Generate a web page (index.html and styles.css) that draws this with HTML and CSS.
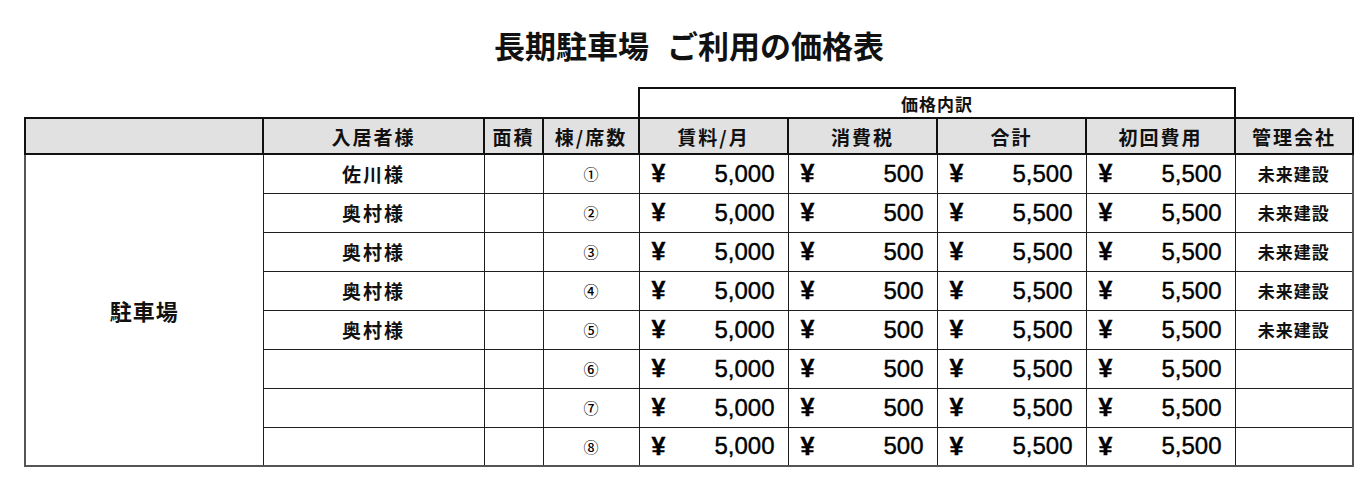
FILE: index.html
```html
<!DOCTYPE html>
<html lang="ja">
<head>
<meta charset="utf-8">
<title>長期駐車場 ご利用の価格表</title>
<link rel="stylesheet" href="styles.css">
</head>
<body>
<div class="page">
  <h1 class="title"><span>長期駐車場</span> <span class="title-sub">ご利用の価格表</span></h1>
  <table class="price">
    <colgroup>
      <col class="c-place"><col class="c-name"><col class="c-area"><col class="c-no">
      <col class="c-money"><col class="c-money"><col class="c-money"><col class="c-money">
      <col class="c-co">
    </colgroup>
    <thead>
      <tr class="group">
        <td colspan="4" class="blank"></td>
        <th colspan="4" class="group-head">価格内訳</th>
        <td class="blank"></td>
      </tr>
      <tr class="head">
        <th></th><th>入居者様</th><th>面積</th><th>棟/席数</th>
        <th>賃料/月</th><th>消費税</th><th>合計</th><th>初回費用</th><th>管理会社</th>
      </tr>
    </thead>
    <tbody>
      <tr>
        <td rowspan="8" class="place">駐車場</td>
        <td class="name">佐川様</td><td></td><td class="no">①</td>
        <td><div class="money"><span class="yen">¥</span><span>5,000</span></div></td>
        <td><div class="money"><span class="yen">¥</span><span>500</span></div></td>
        <td><div class="money"><span class="yen">¥</span><span>5,500</span></div></td>
        <td><div class="money"><span class="yen">¥</span><span>5,500</span></div></td>
        <td class="co">未来建設</td>
      </tr>
      <tr>
        <td class="name">奥村様</td><td></td><td class="no">②</td>
        <td><div class="money"><span class="yen">¥</span><span>5,000</span></div></td>
        <td><div class="money"><span class="yen">¥</span><span>500</span></div></td>
        <td><div class="money"><span class="yen">¥</span><span>5,500</span></div></td>
        <td><div class="money"><span class="yen">¥</span><span>5,500</span></div></td>
        <td class="co">未来建設</td>
      </tr>
      <tr>
        <td class="name">奥村様</td><td></td><td class="no">③</td>
        <td><div class="money"><span class="yen">¥</span><span>5,000</span></div></td>
        <td><div class="money"><span class="yen">¥</span><span>500</span></div></td>
        <td><div class="money"><span class="yen">¥</span><span>5,500</span></div></td>
        <td><div class="money"><span class="yen">¥</span><span>5,500</span></div></td>
        <td class="co">未来建設</td>
      </tr>
      <tr>
        <td class="name">奥村様</td><td></td><td class="no">④</td>
        <td><div class="money"><span class="yen">¥</span><span>5,000</span></div></td>
        <td><div class="money"><span class="yen">¥</span><span>500</span></div></td>
        <td><div class="money"><span class="yen">¥</span><span>5,500</span></div></td>
        <td><div class="money"><span class="yen">¥</span><span>5,500</span></div></td>
        <td class="co">未来建設</td>
      </tr>
      <tr>
        <td class="name">奥村様</td><td></td><td class="no">⑤</td>
        <td><div class="money"><span class="yen">¥</span><span>5,000</span></div></td>
        <td><div class="money"><span class="yen">¥</span><span>500</span></div></td>
        <td><div class="money"><span class="yen">¥</span><span>5,500</span></div></td>
        <td><div class="money"><span class="yen">¥</span><span>5,500</span></div></td>
        <td class="co">未来建設</td>
      </tr>
      <tr>
        <td class="name"></td><td></td><td class="no">⑥</td>
        <td><div class="money"><span class="yen">¥</span><span>5,000</span></div></td>
        <td><div class="money"><span class="yen">¥</span><span>500</span></div></td>
        <td><div class="money"><span class="yen">¥</span><span>5,500</span></div></td>
        <td><div class="money"><span class="yen">¥</span><span>5,500</span></div></td>
        <td class="co"></td>
      </tr>
      <tr>
        <td class="name"></td><td></td><td class="no">⑦</td>
        <td><div class="money"><span class="yen">¥</span><span>5,000</span></div></td>
        <td><div class="money"><span class="yen">¥</span><span>500</span></div></td>
        <td><div class="money"><span class="yen">¥</span><span>5,500</span></div></td>
        <td><div class="money"><span class="yen">¥</span><span>5,500</span></div></td>
        <td class="co"></td>
      </tr>
      <tr>
        <td class="name"></td><td></td><td class="no">⑧</td>
        <td><div class="money"><span class="yen">¥</span><span>5,000</span></div></td>
        <td><div class="money"><span class="yen">¥</span><span>500</span></div></td>
        <td><div class="money"><span class="yen">¥</span><span>5,500</span></div></td>
        <td><div class="money"><span class="yen">¥</span><span>5,500</span></div></td>
        <td class="co"></td>
      </tr>
    </tbody>
  </table>
</div>
</body>
</html>
```

FILE: styles.css
```css
html, body {
  margin: 0;
  padding: 0;
  background: #ffffff;
  color: #111111;
  font-family: "Liberation Sans", "Noto Sans CJK JP", sans-serif;
}

.page {
  padding: 0 14px 0 24px;
}

.title {
  margin: 0;
  padding-top: 27px;
  height: 35px;
  line-height: 35px;
  font-family: "Noto Sans CJK JP", sans-serif;
  font-size: 31px;
  font-weight: 700;
  text-align: center;
  color: #111;
  padding-left: 2px;
}

.title-sub {
  margin-left: 11px;
}

.price {
  margin-top: 25px;
  width: 1328px;
  table-layout: fixed;
  border-collapse: collapse;
}

.c-place { width: 238px; }
.c-name { width: 221px; }
.c-area { width: 59px; }
.c-no { width: 96px; }
.c-money { width: 149px; }
.c-co { width: 118px; }

.price th,
.price td {
  padding: 0;
  text-align: center;
  vertical-align: middle;
}

.group { height: 30px; }

.group .blank {
  border: none;
}

.group-head {
  border: 2px solid #111;
  font-family: "Noto Sans CJK JP", sans-serif;
  font-size: 17px;
  font-weight: 700;
  letter-spacing: 1px;
}

.head { height: 36px; }

.head th {
  background: #e1e1e1;
  border: 2px solid #111;
  font-family: "Noto Sans CJK JP", sans-serif;
  font-size: 19px;
  font-weight: 700;
  letter-spacing: 2px;
}

.price tbody tr { height: 39px; }

.price tbody td {
  border: 1px solid #1e1e1e;
}

.price tbody td:last-child {
  border-right: 2px solid #555;
}

.price tbody tr:last-child td,
.price tbody td.place {
  border-bottom: 2px solid #555;
}

.price tbody td.place {
  border-left: 2px solid #555;
  font-family: "Noto Sans CJK JP", sans-serif;
  font-size: 22px;
  font-weight: 700;
  letter-spacing: 1px;
}

.name {
  font-family: "Noto Sans CJK JP", sans-serif;
  font-size: 19px;
  font-weight: 700;
  letter-spacing: 2px;
}

.no {
  font-family: "Noto Sans CJK JP", sans-serif;
  font-size: 15px;
  font-weight: 500;
  color: #000;
}

.co {
  font-family: "Noto Sans CJK JP", sans-serif;
  font-size: 17px;
  font-weight: 700;
  letter-spacing: 1px;
}

.money {
  display: flex;
  justify-content: space-between;
  align-items: center;
  padding: 0 13px 0 12px;
  font-family: "Liberation Sans", sans-serif;
  font-size: 24px;
  color: #000;
  -webkit-text-stroke: 0.4px #000;
}

.yen {
  font-weight: 700;
  font-size: 25px;
}
```
